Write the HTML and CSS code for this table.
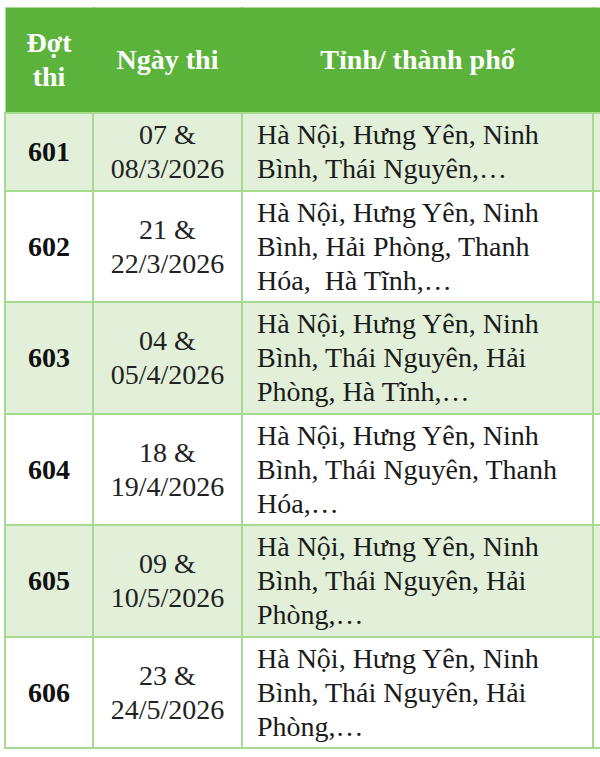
FILE: index.html
```html
<!DOCTYPE html>
<html lang="vi">
<head>
<meta charset="utf-8">
<link rel="stylesheet" href="styles.css">
</head>
<body>
<div class="wrap">
<table class="schedule">
  <colgroup>
    <col class="c-id"><col class="c-date"><col class="c-place"><col class="c-extra">
  </colgroup>
  <thead>
    <tr>
      <th>Đợt<br>thi</th>
      <th>Ngày thi</th>
      <th>Tỉnh/ thành phố</th>
      <th></th>
    </tr>
  </thead>
  <tbody>
    <tr class="alt">
      <td class="id">601</td>
      <td class="date">07 &amp;<br>08/3/2026</td>
      <td class="place">Hà Nội, Hưng Yên, Ninh Bình, Thái Nguyên,…</td>
      <td></td>
    </tr>
    <tr>
      <td class="id">602</td>
      <td class="date">21 &amp;<br>22/3/2026</td>
      <td class="place">Hà Nội, Hưng Yên, Ninh Bình, Hải Phòng, Thanh Hóa,&nbsp; Hà Tĩnh,…</td>
      <td></td>
    </tr>
    <tr class="alt">
      <td class="id">603</td>
      <td class="date">04 &amp;<br>05/4/2026</td>
      <td class="place">Hà Nội, Hưng Yên, Ninh Bình, Thái Nguyên, Hải Phòng, Hà Tĩnh,…</td>
      <td></td>
    </tr>
    <tr>
      <td class="id">604</td>
      <td class="date">18 &amp;<br>19/4/2026</td>
      <td class="place">Hà Nội, Hưng Yên, Ninh Bình, Thái Nguyên, Thanh Hóa,…</td>
      <td></td>
    </tr>
    <tr class="alt">
      <td class="id">605</td>
      <td class="date">09 &amp;<br>10/5/2026</td>
      <td class="place">Hà Nội, Hưng Yên, Ninh Bình, Thái Nguyên, Hải Phòng,…</td>
      <td></td>
    </tr>
    <tr>
      <td class="id">606</td>
      <td class="date">23 &amp;<br>24/5/2026</td>
      <td class="place">Hà Nội, Hưng Yên, Ninh Bình, Thái Nguyên, Hải Phòng,…</td>
      <td></td>
    </tr>
  </tbody>
</table>
</div>
</body>
</html>
```

FILE: styles.css
```css
html, body {
  margin: 0;
  padding: 0;
  background: #ffffff;
  overflow: hidden;
}
body {
  width: 600px;
  height: 757px;
}
.wrap {
  padding: 7px 0 0 4px;
  width: 700px;
}
.schedule {
  border-collapse: collapse;
  table-layout: fixed;
  width: 650px;
  font-family: "Liberation Serif", "Times New Roman", serif;
  font-size: 28px;
  line-height: 34.15px;
  color: #141414;
}
.c-id { width: 88px; }
.c-date { width: 149px; }
.c-place { width: 351px; }
.c-extra { width: 62px; }

.schedule th {
  background: #5bb33b;
  color: #ffffff;
  font-weight: bold;
  text-align: center;
  padding: 18px 0 18px;
  border: 1px solid #5bb33b;
  border-top-color: #a9dc96;
  height: 68px;
}
.schedule th:first-child { border-left-color: #a9dc96; }

.schedule td {
  border: 2px solid #a5da90;
  padding: 4px 0 3px;
  vertical-align: middle;
  background: #ffffff;
}
.schedule tr.alt td { background: #e2f0d9; }

.schedule td.id {
  font-weight: bold;
  text-align: center;
  color: #111111;
}
.schedule td.date {
  text-align: center;
  color: #222222;
}
.schedule td.place {
  text-align: left;
  padding-left: 14px;
  padding-right: 8px;
  color: #1a1a1a;
}
```
